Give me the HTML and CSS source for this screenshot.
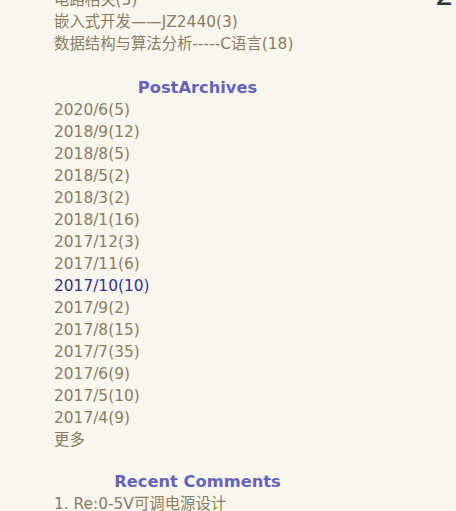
FILE: index.html
```html
<!DOCTYPE html>
<html lang="zh">
<head>
<meta charset="utf-8">
<title>Sidebar</title>
<link rel="stylesheet" href="styles.css">
</head>
<body>
<div class="big-num">2</div>
<div class="sidebar">
  <ul class="list">
    <li><a href="#">电路相关(3)</a></li>
    <li><a href="#">嵌入式开发——JZ2440(3)</a></li>
    <li><a href="#">数据结构与算法分析-----C语言(18)</a></li>
  </ul>
  <h3 class="title">PostArchives</h3>
  <ul class="list">
    <li><a href="#">2020/6(5)</a></li>
    <li><a href="#">2018/9(12)</a></li>
    <li><a href="#">2018/8(5)</a></li>
    <li><a href="#">2018/5(2)</a></li>
    <li><a href="#">2018/3(2)</a></li>
    <li><a href="#">2018/1(16)</a></li>
    <li><a href="#">2017/12(3)</a></li>
    <li><a href="#">2017/11(6)</a></li>
    <li><a href="#" class="active">2017/10(10)</a></li>
    <li><a href="#">2017/9(2)</a></li>
    <li><a href="#">2017/8(15)</a></li>
    <li><a href="#">2017/7(35)</a></li>
    <li><a href="#">2017/6(9)</a></li>
    <li><a href="#">2017/5(10)</a></li>
    <li><a href="#">2017/4(9)</a></li>
    <li><a href="#">更多</a></li>
  </ul>
  <h3 class="title title-next">Recent Comments</h3>
  <ul class="list">
    <li><a href="#">1. Re:0-5V可调电源设计</a></li>
  </ul>
</div>
</body>
</html>
```

FILE: styles.css
```css
html, body {
  margin: 0;
  padding: 0;
  background: #f9f6ee;
  height: 100%;
  overflow: hidden;
}

body {
  position: relative;
  font-family: "DejaVu Sans", "Noto Sans CJK SC", sans-serif;
  font-size: 15.4px;
  line-height: 22px;
  color: #8a7c63;
}

.big-num {
  position: absolute;
  right: 2px;
  top: -20px;
  font-family: "DejaVu Sans", sans-serif;
  font-size: 30px;
  line-height: 30px;
  color: #333333;
}

.sidebar {
  width: 287px;
  margin-top: -11px;
  padding-left: 54px;
}

.list {
  list-style: none;
  margin: 0;
  padding: 0;
}

.list li {
  height: 22px;
  line-height: 22px;
  white-space: nowrap;
}

.list a {
  color: #8a7c63;
  text-decoration: none;
}

.list a.active {
  color: #333388;
}

.title {
  margin: 22px 0 0 0;
  text-align: center;
  font-size: 16.3px;
  line-height: 22px;
  font-weight: bold;
  color: #6464b4;
}

.title-next {
  margin-top: 20px;
}
```
